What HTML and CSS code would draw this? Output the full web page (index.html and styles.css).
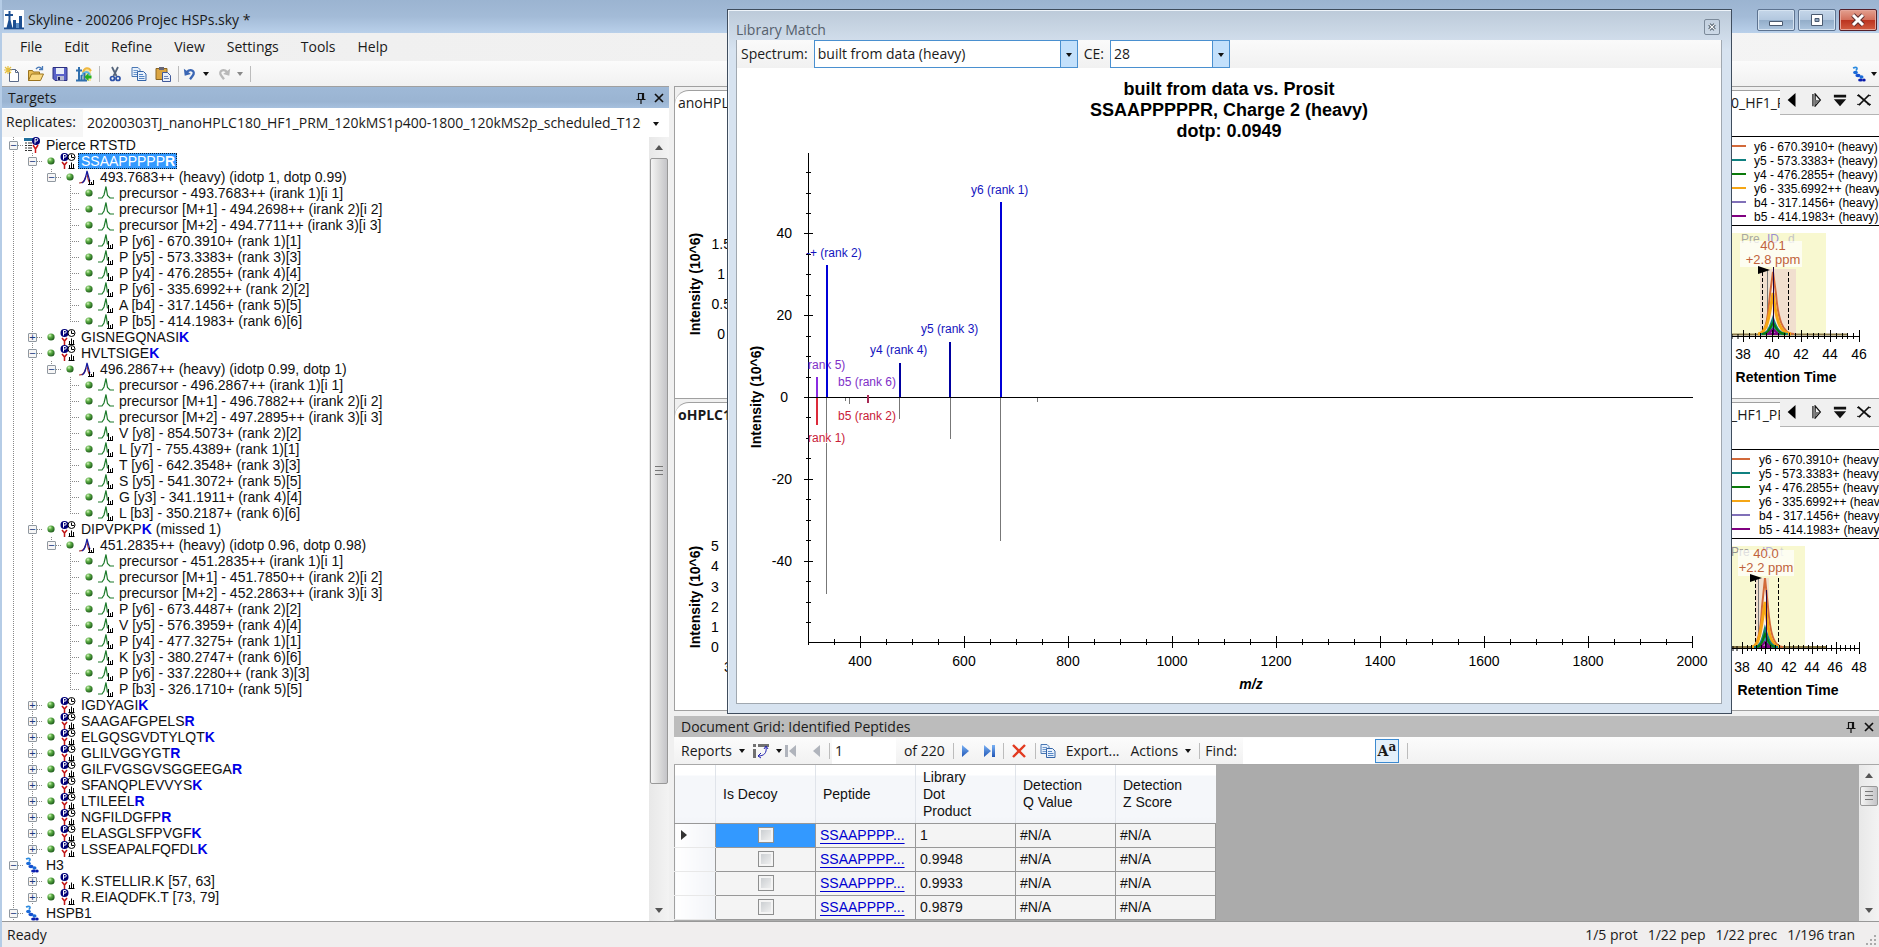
FILE: index.html
```html
<!DOCTYPE html>
<html lang="en">
<head>
<meta charset="utf-8">
<title>Skyline - 200206 Projec HSPs.sky *</title>
<link rel="stylesheet" href="styles.css">
</head>
<body>
<svg class="defs" aria-hidden="true">
  <defs>
    <radialGradient id="ball" cx="35%" cy="30%" r="70%"><stop offset="0" stop-color="#d8f5c0"/><stop offset=".4" stop-color="#5cae45"/><stop offset="1" stop-color="#1f5c1c"/></radialGradient>
    <linearGradient id="blueArrow" x1="0" y1="0" x2="0" y2="1"><stop offset="0" stop-color="#7ab2f5"/><stop offset="1" stop-color="#1f55b5"/></linearGradient>
  </defs>
  <symbol id="i-dot" viewBox="0 0 8 8"><circle cx="4" cy="4" r="3.6" fill="url(#ball)"/></symbol>
  <symbol id="i-list" viewBox="0 0 16 16"><path d="M0 1h9v3H0z" fill="#1f6f9c"/><path d="M1 6h2M4 6h4M1 8.500h2M4 8.500h4M1 11h2M4 11h4M1 13.500h2M4 13.500h4" stroke="#333"/><circle cx="12" cy="4" r="4" fill="#000078"/><path d="M11 6.500v-5h1.500a1.200 1.200 0 0 1 0 2.600H11" fill="none" stroke="#fff"/><path d="M9 8l2.500 4L14 8M11.500 12v4" fill="none" stroke="#d01515" stroke-width="1.500"/></symbol>
  <symbol id="i-pep" viewBox="0 0 16 16"><circle cx="4.500" cy="4" r="4" fill="#000078"/><path d="M3.500 6.500v-5H5a1.200 1.200 0 0 1 0 2.600H3.500" fill="none" stroke="#fff"/><path d="M2 9l2.500 3L7 9M4.500 12v4" fill="none" stroke="#c01515" stroke-width="1.500"/><path d="M8.500 15.500h6M9.500 15v-3M11.500 15V9.500M13.500 15v-4" stroke="#000"/></symbol>
  <symbol id="i-peprt" viewBox="0 0 16 16"><use href="#i-pep"/><circle cx="11.500" cy="4" r="3.500" fill="#fff" stroke="#000"/><path d="M11.500 1.500V4.500H14" fill="none" stroke="#000"/></symbol>
  <symbol id="i-prec" viewBox="0 0 16 16"><path d="M0 14c4 0 5-1 7-7M8 4c1 6 1 8 3 10" fill="none" stroke="#a03030" stroke-width="1.200"/><path d="M3 14c3-1 3.500-5 5-12 1.500 5 2 8 3 10" fill="none" stroke="#1018a0" stroke-width="1.200"/><path d="M9 15.500h6M10.500 15v-4M12.500 15v-2M14.500 15v-4" stroke="#000"/></symbol>
  <symbol id="i-peak" viewBox="0 0 16 16"><path d="M0 13h4l2-3 2-8.500 1.500 9L12 13h4" fill="none" stroke="#1c7a2a" stroke-width="1.200"/></symbol>
  <symbol id="i-peaklib" viewBox="0 0 16 16"><path d="M0 13h4l2-3 2-8.500 1.500 10" fill="none" stroke="#1c7a2a" stroke-width="1.200"/><path d="M9 15.500h6M10.500 15V8M12.500 15v-3M14.500 15v-4" stroke="#000"/></symbol>
  <symbol id="i-prot" viewBox="0 0 16 16"><path d="M2 2c4-1.500 5 0 3 2.500" fill="none" stroke="#2a8ae0" stroke-width="1.600"/><ellipse cx="4.500" cy="6.500" rx="2.400" ry="1.700" fill="#1a6ad8"/><ellipse cx="7" cy="9.500" rx="2.600" ry="1.700" fill="#1450d0"/><ellipse cx="10.500" cy="11" rx="2" ry="1.700" fill="#1a6ad8"/><ellipse cx="9.500" cy="14" rx="2.400" ry="1.600" fill="#0a20b0"/><ellipse cx="13" cy="14" rx="1.700" ry="1.600" fill="#0818a8"/></symbol>
  <symbol id="i-new" viewBox="0 0 16 16"><path d="M5.500 3.500h6l3 3v9h-9z" fill="#fff" stroke="#5a6a88"/><path d="M11.500 3.500v3h3" fill="none" stroke="#5a6a88"/><path d="M4 0v8M0 4h8M1 1l6 6M7 1L1 7" stroke="#e6c040" stroke-width="1.200"/></symbol>
  <symbol id="i-open" viewBox="0 0 16 16"><path d="M.5 14.500V4.500h4l1 1.500h6v8z" fill="#e8bd55" stroke="#9a7420"/><path d="M.5 14.500l3-6.500h12l-3 6.500z" fill="#f9da85" stroke="#9a7420"/><path d="M8 3c2-2.500 4-2.500 6 0M14.500 0v3.500H11" fill="none" stroke="#4a7ab8" stroke-width="1.300"/></symbol>
  <symbol id="i-save" viewBox="0 0 16 16"><path d="M1 1.500h14v13H3L1 12.500z" fill="#5a62c8" stroke="#2c3080"/><path d="M4 2h8v6H4z" fill="#e8edf8"/><path d="M5 10h7v4.500H5z" fill="#b8bcd0"/><path d="M6 11h2v3H6z" fill="#20245c"/></symbol>
  <symbol id="i-import" viewBox="0 0 16 16"><path d="M7 3h8v12H7z" fill="#f6e2a0"/><path d="M7 7c1-6 6-6 8-2" fill="none" stroke="#f0b840" stroke-width="2"/><path d="M6 10c1-5 6-5 8-1" fill="none" stroke="#62b7e8" stroke-width="2"/><path d="M0 14.500h11M3 14V1M0 4.500h6M5.500 14V9M8.500 14V7" stroke="#2f6fae" stroke-width="2" fill="none"/><path d="M15.500 9.500h-3V7L8.500 11l4 4v-2.500h3z" fill="#22b022"/></symbol>
  <symbol id="i-cut" viewBox="0 0 16 16"><path d="M5 1l4.500 9M11 1L6.500 10" stroke="#56657c" stroke-width="1.800"/><circle cx="5.500" cy="12.500" r="2" fill="none" stroke="#2d52a8" stroke-width="1.700"/><circle cx="11" cy="12.500" r="2" fill="none" stroke="#2d52a8" stroke-width="1.700"/></symbol>
  <symbol id="i-copy" viewBox="0 0 16 16"><path d="M1 1.500h6l2 2v7H1z" fill="#e8f1fc" stroke="#4a78b4"/><path d="M2.500 4.500H7M2.500 6.500H7M2.500 8.500H7" stroke="#6e98cc"/><path d="M6.500 5.500h6l2.500 2.500v6.500H6.500z" fill="#e8f1fc" stroke="#3565a8"/><path d="M8 8.500h4M8 10.500h5.500M8 12.500h5.500" stroke="#5485c4"/></symbol>
  <symbol id="i-paste" viewBox="0 0 16 16"><path d="M1 2.500h11v11H1z" fill="#dba542" stroke="#8a6420"/><path d="M4 1h5v3H4z" fill="#667"/><path d="M7.500 6.500h5l3 3v6h-8z" fill="#e8eef8" stroke="#40599a"/><path d="M9 10.500h4M9 12.500h5" stroke="#6e85b8"/></symbol>
  <symbol id="i-undo" viewBox="0 0 16 16"><path d="M4 6c5-5 11-1 7 4l-3 4" fill="none" stroke="currentColor" stroke-width="2.600"/><path d="M1 2l1 8 7-2z" fill="currentColor"/></symbol>
  <symbol id="i-pin" viewBox="0 0 12 12"><path d="M3.500 7V1.500h5V7M1.500 7.500h9M6 8v4M7.500 2v5" fill="none" stroke="#111" stroke-width="1.200"/></symbol>
  <symbol id="i-x" viewBox="0 0 12 12"><path d="M2 2l8 8M10 2l-8 8" stroke="#111" stroke-width="1.700"/></symbol>
  <symbol id="i-prev" viewBox="0 0 16 16"><path d="M12 0v16L3 8z" fill="#000"/></symbol>
  <symbol id="i-nextp" viewBox="0 0 16 16"><path d="M4.500 1v14M7 1l6 7-6 7z" fill="none" stroke="#111" stroke-width="1.400"/><path d="M7 8v6l5-6z" fill="#777"/></symbol>
  <symbol id="i-drop" viewBox="0 0 16 16"><path d="M1 2h14v3H1zM1 7h14l-7 8z" fill="#111"/></symbol>
  <symbol id="i-bigx" viewBox="0 0 16 16"><path d="M1 2l14 12M14 2L2 14" stroke="#111" stroke-width="2"/><path d="M0 3h3M13 3h3M0 13h4M12 13h4" stroke="#111"/></symbol>
</svg>

<div class="app">
  <header class="titlebar">
    <svg class="logo" viewBox="0 0 20 20"><path d="M0 0h20v20H0z" fill="#fff"/><path d="M0 18.500h20M5.500 18V1M1 5h8M3.500 18l2-8 2 8" stroke="#1d4f91" stroke-width="2" fill="none"/><path d="M9 10h3v8H9zM15 6h3v12h-3z" fill="#1d4f91"/><path d="M12 13h3v5h-3z" fill="#5b8cc4"/></svg>
    <h1>Skyline - 200206 Projec HSPs.sky *</h1>
    <div class="winbtns">
      <button aria-label="Minimize"><svg viewBox="0 0 16 16"><path d="M1.500 9.500h13v4h-13z" fill="#fff" stroke="#4a5a70"/></svg></button>
      <button aria-label="Restore"><svg viewBox="0 0 16 16"><path d="M2.500 2.500h11v11h-11z" fill="#fff" stroke="#4a5a70"/><path d="M6 6.500h4v3H6z" fill="#8fa5bf" stroke="#4a5a70"/></svg></button>
      <button class="close" aria-label="Close"><svg viewBox="0 0 16 16"><path d="M3 3l10 10M13 3L3 13" stroke="#5c3030" stroke-width="5"/><path d="M3 3l10 10M13 3L3 13" stroke="#fff" stroke-width="3"/></svg></button>
    </div>
  </header>

  <nav class="menu">
    <button>File</button><button>Edit</button><button>Refine</button><button>View</button><button>Settings</button><button>Tools</button><button>Help</button>
  </nav>

  <div class="toolbar">
    <button aria-label="New"><svg><use href="#i-new"/></svg></button>
    <button aria-label="Open"><svg><use href="#i-open"/></svg></button>
    <button aria-label="Save"><svg><use href="#i-save"/></svg></button>
    <button aria-label="Import results"><svg><use href="#i-import"/></svg></button>
    <i class="sep"></i>
    <button aria-label="Cut"><svg><use href="#i-cut"/></svg></button>
    <button aria-label="Copy"><svg><use href="#i-copy"/></svg></button>
    <button aria-label="Paste"><svg><use href="#i-paste"/></svg></button>
    <i class="sep"></i>
    <button class="undo" aria-label="Undo"><svg><use href="#i-undo"/></svg><i class="caret"></i></button>
    <button class="redo" aria-label="Redo"><svg class="flip"><use href="#i-undo"/></svg><i class="caret"></i></button>
    <i class="sep"></i>
    <button class="far" aria-label="Targets view"><svg><use href="#i-prot"/></svg><i class="caret"></i></button>
  </div>

  <main class="work">
    <section class="targets">
      <div class="dockhead"><h2>Targets</h2><button aria-label="Auto hide"><svg><use href="#i-pin"/></svg></button><button aria-label="Close Targets"><svg><use href="#i-x"/></svg></button></div>
      <div class="replicates">
        <label for="rep">Replicates:</label>
        <span class="pick flat"><select id="rep"><option>20200303TJ_nanoHPLC180_HF1_PRM_120kMS1p400-1800_120kMS2p_scheduled_T120_01</option></select></span>
      </div>
      <div class="treebox">
        <ul class="tree" id="tree"></ul>
        <div class="scroll"><i class="up"></i><i class="thumb long"></i><i class="down"></i></div>
      </div>
    </section>

    <div class="right">
      <div class="plots">
        <section class="pane">
          <div class="tabs">
            <span class="tab"><span>anoHPLC180</span><span class="tail">0_HF1_PR</span></span>
            <button aria-label="Previous tab"><svg><use href="#i-prev"/></svg></button><button aria-label="Next tab"><svg><use href="#i-nextp"/></svg></button><button aria-label="Tab list"><svg><use href="#i-drop"/></svg></button><button aria-label="Close tab"><svg><use href="#i-bigx"/></svg></button>
          </div>
          <div class="graphs">
            <svg class="gleft" viewBox="675 114 60 284">
              <text class="b14" text-anchor="middle" transform="translate(700 283) rotate(-90)">Intensity (10^6)</text>
              <g class="t14" text-anchor="end"><text x="731" y="248">1.5</text><text x="725" y="278">1</text><text x="731" y="308">0.5</text><text x="725" y="338">0</text></g>
            </svg>
            <svg class="gright" viewBox="1731 114 148 284">
              <path d="M1731 135.500h148M1731 224.500h148" stroke="#000"/>
              <g stroke-width="2"><path d="M1731 145h15" stroke="#d2693a"/><path d="M1731 159h15" stroke="#0f8080"/><path d="M1731 173h15" stroke="#0a7a0a"/><path d="M1731 187h15" stroke="#f5a615"/><path d="M1731 201h15" stroke="#8070b8"/><path d="M1731 215h15" stroke="#800080"/></g>
              <g class="t12"><text x="1754" y="150">y6 - 670.3910+ (heavy)</text><text x="1754" y="164">y5 - 573.3383+ (heavy)</text><text x="1754" y="178">y4 - 476.2855+ (heavy)</text><text x="1754" y="192">y6 - 335.6992++ (heavy)</text><text x="1754" y="206">b4 - 317.1456+ (heavy)</text><text x="1754" y="220">b5 - 414.1983+ (heavy)</text></g>
              <path d="M1731 232h95v102h-95z" fill="#f8f8d0"/>
              <path d="M1760 268h36v66h-36z" fill="#f1dfcf"/>
              <text class="t12" x="1741" y="242" fill="#a8a8a0">Pre</text><text class="t12" x="1767" y="242" fill="#9a8fd0">ID</text><text class="t12" x="1788" y="242" fill="#c4c4c4">d</text>
              <path d="M1740 240h62v26h-62z" fill="#fff" fill-opacity=".7"/>
              <path d="M1767.500 268v66" stroke="#777"/><path d="M1762.500 271v63M1788.500 271v63" stroke="#000" stroke-dasharray="4 2"/>
              <path d="M1731 333.500h117" stroke="#8a7a48" stroke-width="2"/>
              <g fill="none" stroke-width="2">
                <path d="M1758 333c9 0 10-20 12-40l3-22 3 22c2 24 6 40 18 40" stroke="#d2693a" fill="#fff" fill-opacity=".5"/>
                <path d="M1758 333c9 0 11-16 15-41 3 25 6 41 18 41" stroke="#f5a615" stroke-width="3"/>
                <path d="M1760 333c7 0 9-4 13-16 4 12 7 16 15 16z" stroke="#0f8080" fill="#2a9a9a"/>
                <path d="M1762 333c6 0 7-4 11-11 4 7 6 11 13 11" stroke="#0a7a0a"/>
                <path d="M1768 333l5-5 5 5z" stroke="#800080" fill="#b080c0"/>
              </g>
              <path d="M1773.500 266v68" stroke="#200040"/>
              <path d="M1758 265l12 4-12 4z"/>
              <g class="t13" text-anchor="middle" fill="#c0623c"><text x="1773" y="249">40.1</text><text x="1773" y="263">+2.8 ppm</text></g>
              <g id="ax1" stroke="#000"></g>
              <g class="t14" text-anchor="middle"><text x="1743" y="358">38</text><text x="1772" y="358">40</text><text x="1801" y="358">42</text><text x="1830" y="358">44</text><text x="1859" y="358">46</text></g>
              <text class="b14" x="1786" y="381" text-anchor="middle">Retention Time</text>
            </svg>
          </div>
        </section>
        <section class="pane">
          <div class="tabs active">
            <span class="tab"><span>oHPLC180</span><span class="tail">_HF1_PRM</span></span>
            <button aria-label="Previous tab"><svg><use href="#i-prev"/></svg></button><button aria-label="Next tab"><svg><use href="#i-nextp"/></svg></button><button aria-label="Tab list"><svg><use href="#i-drop"/></svg></button><button aria-label="Close tab"><svg><use href="#i-bigx"/></svg></button>
          </div>
          <div class="graphs">
            <svg class="gleft" viewBox="675 427 60 284">
              <text class="b14" text-anchor="middle" transform="translate(700 597) rotate(-90)">Intensity (10^6)</text>
              <g class="t14" text-anchor="middle"><text x="715" y="551">5</text><text x="715" y="571">4</text><text x="715" y="592">3</text><text x="715" y="612">2</text><text x="715" y="632">1</text><text x="715" y="652">0</text><text x="728" y="672">3</text></g>
            </svg>
            <svg class="gright" viewBox="1731 427 148 284">
              <path d="M1731 449.500h148M1731 538.500h148" stroke="#000"/>
              <g stroke-width="2"><path d="M1731 459h19" stroke="#d2693a"/><path d="M1731 473h19" stroke="#0f8080"/><path d="M1731 487h19" stroke="#0a7a0a"/><path d="M1731 501h19" stroke="#f5a615"/><path d="M1731 515h19" stroke="#8070b8"/><path d="M1731 529h19" stroke="#800080"/></g>
              <g class="t12"><text x="1759" y="464">y6 - 670.3910+ (heavy)</text><text x="1759" y="478">y5 - 573.3383+ (heavy)</text><text x="1759" y="492">y4 - 476.2855+ (heavy)</text><text x="1759" y="506">y6 - 335.6992++ (heavy)</text><text x="1759" y="520">b4 - 317.1456+ (heavy)</text><text x="1759" y="534">b5 - 414.1983+ (heavy)</text></g>
              <path d="M1731 546h74v102h-74z" fill="#f8f8d0"/>
              <path d="M1755 578h14v70h-14z" fill="#f1dfcf"/>
              <text class="t12" x="1731" y="556" fill="#909090">Pre</text><text class="t12" x="1762" y="556" fill="#b8b0d8">ID</text><text class="t12" x="1780" y="556" fill="#d0d0d0">t</text>
              <path d="M1738 550h56v26h-56z" fill="#fff" fill-opacity=".7"/>
              <path d="M1758.500 578v70" stroke="#777"/><path d="M1755.500 578v70M1778.500 578v70" stroke="#000" stroke-dasharray="4 2"/>
              <path d="M1731 647h96" stroke="#8a7a48" stroke-width="2"/>
              <g fill="none" stroke-width="2">
                <path d="M1751 647c8 0 10-20 11-40l3-29 3 29c2 24 5 40 15 40" stroke="#d2693a" fill="#fff" fill-opacity=".5"/>
                <path d="M1752 647c7 0 9-16 13-45 3 29 5 45 15 45" stroke="#f5a615" stroke-width="3"/>
                <path d="M1754 647c6 0 8-6 11-19 4 13 6 19 13 19z" stroke="#0f8080" fill="#2a9a9a"/>
                <path d="M1756 647c5 0 6-4 9-13 4 9 5 13 11 13" stroke="#0a7a0a"/>
                <path d="M1761 647l4-5 5 5z" stroke="#800080" fill="#b080c0"/>
              </g>
              <path d="M1766.500 590v58" stroke="#200040"/>
              <path d="M1750 574l12 4-12 4z"/>
              <g class="t13" text-anchor="middle" fill="#c0623c"><text x="1766" y="558">40.0</text><text x="1766" y="572">+2.2 ppm</text></g>
              <g id="ax2" stroke="#000"></g>
              <g class="t14" text-anchor="middle"><text x="1742" y="672">38</text><text x="1765" y="672">40</text><text x="1789" y="672">42</text><text x="1812" y="672">44</text><text x="1835" y="672">46</text><text x="1859" y="672">48</text></g>
              <text class="b14" x="1788" y="695" text-anchor="middle">Retention Time</text>
            </svg>
          </div>
        </section>
      </div>

      <section class="docgrid">
        <div class="dockhead gray"><h2>Document Grid: Identified Peptides</h2><button aria-label="Auto hide"><svg><use href="#i-pin"/></svg></button><button aria-label="Close Document Grid"><svg><use href="#i-x"/></svg></button></div>
        <div class="gridbar">
          <button class="txt">Reports<i class="caret"></i></button>
          <button class="pivot" aria-label="Pivot"><svg viewBox="0 0 16 16"><path d="M0 1h3v3H0zM5 1h11v3H5zM0 6h3v9H0z" fill="#707070"/><path d="M13 4c1 6-2 9-8 9M11 6l2-3 2 3M8 10l-3 3 3 2" fill="none" stroke="#2020b0"/></svg><i class="caret"></i></button>
          <button class="first" aria-label="First"><svg viewBox="0 0 16 16"><path d="M2 2h3v12H2zM13 2v12L6 8z" fill="#b0b4bc"/></svg></button>
          <button class="prev" aria-label="Previous"><svg viewBox="0 0 16 16"><path d="M11 2v12L4 8z" fill="#b0b4bc"/></svg></button>
          <i class="sep"></i>
          <input class="pos" aria-label="Record" value="1">
          <span class="of">of 220</span>
          <i class="sep"></i>
          <button class="next" aria-label="Next"><svg viewBox="0 0 16 16"><path d="M5 2v12l7-6z" fill="url(#blueArrow)"/></svg></button>
          <button class="last" aria-label="Last"><svg viewBox="0 0 16 16"><path d="M3 2v12l7-6zM11 2h3v12h-3z" fill="url(#blueArrow)"/></svg></button>
          <i class="sep"></i>
          <button class="del" aria-label="Delete"><svg viewBox="0 0 16 16"><path d="M2 2l12 12M14 2L2 14" stroke="#e23a20" stroke-width="2.400"/></svg></button>
          <i class="sep"></i>
          <button class="txt exp"><svg><use href="#i-copy"/></svg>Export...</button>
          <button class="txt">Actions<i class="caret"></i></button>
          <i class="sep"></i>
          <label for="find">Find:</label><input id="find" class="find">
          <button class="case" aria-label="Match case">A<sup>a</sup></button>
          <i class="sep"></i>
        </div>
        <div class="gridbody">
          <div class="sheet">
          <table>
            <thead><tr><th class="rh"></th><th>Is Decoy</th><th>Peptide</th><th>Library<br>Dot<br>Product</th><th>Detection<br>Q Value</th><th>Detection<br>Z Score</th></tr></thead>
            <tbody>
              <tr><td class="rh"><i class="cur"></i></td><td class="ck on"><input type="checkbox" aria-label="Is Decoy, row 1"></td><td class="pp"><a href="#">SSAAPPPP...</a></td><td>1</td><td>#N/A</td><td>#N/A</td></tr>
              <tr><td class="rh"></td><td class="ck"><input type="checkbox" aria-label="Is Decoy, row 2"></td><td class="pp"><a href="#">SSAAPPPP...</a></td><td>0.9948</td><td>#N/A</td><td>#N/A</td></tr>
              <tr><td class="rh"></td><td class="ck"><input type="checkbox" aria-label="Is Decoy, row 3"></td><td class="pp"><a href="#">SSAAPPPP...</a></td><td>0.9933</td><td>#N/A</td><td>#N/A</td></tr>
              <tr><td class="rh"></td><td class="ck"><input type="checkbox" aria-label="Is Decoy, row 4"></td><td class="pp"><a href="#">SSAAPPPP...</a></td><td>0.9879</td><td>#N/A</td><td>#N/A</td></tr>
            </tbody>
          </table>
          </div>
          <div class="scroll"><i class="up"></i><i class="thumb short"></i><i class="space"></i><i class="down"></i></div>
        </div>
      </section>
    </div>
  </main>

  <footer class="status"><span>Ready</span><span class="counts"><span>1/5 prot</span><span>1/22 pep</span><span>1/22 prec</span><span>1/196 tran</span></span>
    <svg class="grip" viewBox="0 0 12 12"><path d="M9 0h2v2H9zM5 4h2v2H5zM9 4h2v2H9zM1 8h2v2H1zM5 8h2v2H5zM9 8h2v2H9z" fill="#aaa"/></svg></footer>

  <section class="float">
    <div class="floathead"><h2>Library Match</h2><button aria-label="Close Library Match"><svg viewBox="0 0 12 12"><path d="M2 2l8 8M10 2l-8 8" stroke="#4a5866" stroke-width="4.500"/><path d="M2 2l8 8M10 2l-8 8" stroke="#fff" stroke-width="1.800"/></svg></button></div>
    <div class="floatbody">
      <div class="specbar">
        <label for="spec">Spectrum:</label><span class="pick spec"><select id="spec"><option>built from data (heavy)</option></select></span>
        <label for="ce">CE:</label><span class="pick ce"><select id="ce"><option>28</option></select></span>
      </div>
      <svg class="spectrum" viewBox="737 68 984 635" role="img" aria-label="Library match spectrum">
        <g class="title" text-anchor="middle"><text x="1229" y="95">built from data vs. Prosit</text><text x="1229" y="116">SSAAPPPPPR, Charge 2 (heavy)</text><text x="1229" y="137">dotp: 0.0949</text></g>
        <g id="axes" stroke="#000"></g>
        <g id="axlabels" class="t14"></g>
        <text class="b14" text-anchor="middle" transform="translate(761 397) rotate(-90)">Intensity (10^6)</text>
        <text class="mz" x="1251" y="689" text-anchor="middle">m/z</text>
        <g stroke="#777"><path d="M826.500 398v196M1000.500 398v143M950.500 398v41M899.500 398v21M845.500 398v3M849.500 398v6M1037.500 398v4"/></g>
        <path d="M809 433h38v10h-38z" fill="#fff"/>
        <g class="t12" fill="#8030c8"><text x="808" y="369">rank 5)</text><text x="838" y="386">b5 (rank 6)</text></g>
        <path d="M827 265v132M1001 202v195" stroke="#0000d8" stroke-width="2"/>
        <path d="M900 363v34M950 342v55" stroke="#0000a0" stroke-width="2"/>
        <path d="M817 377v20" stroke="#8a2be2" stroke-width="2"/><path d="M817 398v27" stroke="#dc2a3a" stroke-width="2"/><path d="M868 395v8" stroke="#a82a55" stroke-width="2"/>
        <g class="t12" fill="#1414c0">
          <text x="806" y="257">-+ (rank 2)</text><text x="971" y="194">y6 (rank 1)</text><text x="921" y="333">y5 (rank 3)</text><text x="870" y="354">y4 (rank 4)</text>
        </g>
        <g class="t12" fill="#c82038"><text x="808" y="442">rank 1)</text><text x="838" y="420">b5 (rank 2)</text></g>
      </svg>
    </div>
  </section>
</div>
<script src="app.js"></script>
</body>
</html>
```

FILE: app.js
```js
// Each node: [level, icon, text, state]; state is "-" open, "+" closed, "" leaf.
// A residue between asterisks is drawn as a heavy-labelled one.
const nodes = [
  [0, "list", "Pierce RTSTD", "-"],
  [1, "peprt", "SSAAPPPPP*R*", "-", true],
  [2, "prec", "493.7683++ (heavy) (idotp 1, dotp 0.99)", "-"],
  [3, "peak", "precursor - 493.7683++ (irank 1)[i 1]"],
  [3, "peak", "precursor [M+1] - 494.2698++ (irank 2)[i 2]"],
  [3, "peak", "precursor [M+2] - 494.7711++ (irank 3)[i 3]"],
  [3, "peaklib", "P [y6] - 670.3910+ (rank 1)[1]"],
  [3, "peaklib", "P [y5] - 573.3383+ (rank 3)[3]"],
  [3, "peaklib", "P [y4] - 476.2855+ (rank 4)[4]"],
  [3, "peaklib", "P [y6] - 335.6992++ (rank 2)[2]"],
  [3, "peaklib", "A [b4] - 317.1456+ (rank 5)[5]"],
  [3, "peaklib", "P [b5] - 414.1983+ (rank 6)[6]"],
  [1, "peprt", "GISNEGQNASI*K*", "+"],
  [1, "peprt", "HVLTSIGE*K*", "-"],
  [2, "prec", "496.2867++ (heavy) (idotp 0.99, dotp 1)", "-"],
  [3, "peak", "precursor - 496.2867++ (irank 1)[i 1]"],
  [3, "peak", "precursor [M+1] - 496.7882++ (irank 2)[i 2]"],
  [3, "peak", "precursor [M+2] - 497.2895++ (irank 3)[i 3]"],
  [3, "peaklib", "V [y8] - 854.5073+ (rank 2)[2]"],
  [3, "peaklib", "L [y7] - 755.4389+ (rank 1)[1]"],
  [3, "peaklib", "T [y6] - 642.3548+ (rank 3)[3]"],
  [3, "peaklib", "S [y5] - 541.3072+ (rank 5)[5]"],
  [3, "peaklib", "G [y3] - 341.1911+ (rank 4)[4]"],
  [3, "peaklib", "L [b3] - 350.2187+ (rank 6)[6]"],
  [1, "peprt", "DIPVPKP*K* (missed 1)", "-"],
  [2, "prec", "451.2835++ (heavy) (idotp 0.96, dotp 0.98)", "-"],
  [3, "peak", "precursor - 451.2835++ (irank 1)[i 1]"],
  [3, "peak", "precursor [M+1] - 451.7850++ (irank 2)[i 2]"],
  [3, "peak", "precursor [M+2] - 452.2863++ (irank 3)[i 3]"],
  [3, "peaklib", "P [y6] - 673.4487+ (rank 2)[2]"],
  [3, "peaklib", "V [y5] - 576.3959+ (rank 4)[4]"],
  [3, "peaklib", "P [y4] - 477.3275+ (rank 1)[1]"],
  [3, "peaklib", "K [y3] - 380.2747+ (rank 6)[6]"],
  [3, "peaklib", "P [y6] - 337.2280++ (rank 3)[3]"],
  [3, "peaklib", "P [b3] - 326.1710+ (rank 5)[5]"],
  [1, "peprt", "IGDYAGI*K*", "+"],
  [1, "peprt", "SAAGAFGPELS*R*", "+"],
  [1, "peprt", "ELGQSGVDTYLQT*K*", "+"],
  [1, "peprt", "GLILVGGYGT*R*", "+"],
  [1, "peprt", "GILFVGSGVSGGEEGA*R*", "+"],
  [1, "peprt", "SFANQPLEVVYS*K*", "+"],
  [1, "peprt", "LTILEEL*R*", "+"],
  [1, "peprt", "NGFILDGFP*R*", "+"],
  [1, "peprt", "ELASGLSFPVGF*K*", "+"],
  [1, "peprt", "LSSEAPALFQFDL*K*", "+"],
  [0, "prot", "H3", "-"],
  [1, "pep", "K.STELLIR.K [57, 63]", "+"],
  [1, "pep", "R.EIAQDFK.T [73, 79]", "+"],
  [0, "prot", "HSPB1", "-"]
];

const tree = document.getElementById("tree");
nodes.forEach(([level, icon, text, state, selected], i) => {
  const next = nodes[i + 1] ? nodes[i + 1][0] : 0;
  let cells = "";
  for (let c = 0; c < level; c++) cells += `<i class="cell${c < 2 ? " line" : ""}"></i>`;
  const kind = state ? "knot" : next < level ? "leaf end" : "leaf";
  const through = level < 2 ? " line" : " half";
  cells += state
    ? `<button class="cell ${kind}${through}" aria-label="Toggle"><b>${state === "-" ? "−" : "+"}</b></button>`
    : `<i class="cell ${kind}"></i>`;
  const dot = level ? '<svg class="dot"><use href="#i-dot"/></svg>' : "";
  const label = text.replace(/\*(.)\*/, "<strong>$1</strong>");
  tree.insertAdjacentHTML("beforeend",
    `<li>${cells}${dot}<svg class="kind${level ? "" : " top"}"><use href="#i-${icon}"/></svg><span class="label${selected ? " sel" : ""}">${label}</span></li>`);
});

function ticks(x, step, count, y, every) {
  let d = "";
  for (let i = 0; i < count; i++) {
    const h = i % every === 0 ? 6 : 3;
    d += `M${Math.round(x + i * step) + 0.5} ${y - h}v${2 * h}`;
  }
  return d;
}

document.getElementById("ax1").innerHTML = `<path d="M1731 335.500h129${ticks(1743, 5.8, 21, 335, 5)}M1738 333v5M1732 333v5"/>`;
document.getElementById("ax2").innerHTML = `<path d="M1731 648.500h129${ticks(1742, 4.68, 26, 648, 5)}M1737 646v5M1733 646v5"/>`;

let y = "";
for (let v = -55; v <= 55; v += 5) {
  const py = Math.round(397 - v * 4.09) + 0.5;
  y += v % 20 === 0 ? `M804 ${py}h9` : `M806 ${py}h5`;
}
document.getElementById("axes").innerHTML =
  `<path d="M808.500 153v489M804 397.500h889M808 642.500h885${ticks(860, 26, 33, 642, 4)}M834.500 639v6M808.500 639v6${y}"/>`;

let labels = "";
for (let v = 400; v <= 2000; v += 200)
  labels += `<text x="${860 + (v - 400) * 0.52}" y="666" text-anchor="middle">${v}</text>`;
for (const v of [40, 20, 0, -20, -40])
  labels += `<text x="${v ? 792 : 788}" y="${Math.round(402 - v * 4.09)}" text-anchor="end">${v}</text>`;
document.getElementById("axlabels").innerHTML = labels;
```

FILE: styles.css
```css
* { box-sizing: border-box; }
body { margin: 0; font: 14px/20px "Open Sans", "Noto Sans", sans-serif; color: #1a1a1a; }
h1, h2 { margin: 0; font-size: 14px; font-weight: normal; }
button, input, select { font: inherit; color: inherit; border: 0; padding: 0; margin: 0; background: none; border-radius: 0; }
svg { display: block; flex: none; }
.defs { position: absolute; width: 0; height: 0; }
.app { position: relative; height: 100vh; display: flex; flex-direction: column; background: #f0f0f0; overflow: hidden; border-left: 2px solid #b5cce6; }

.titlebar { flex: none; height: 33px; display: flex; align-items: center; padding: 6px 2px 0 4px; margin-left: -2px; gap: 4px; background: linear-gradient(#9bb4d1, #a3bbd7 50%, #b9d0ea); }
.logo { width: 20px; height: 20px; }
.titlebar h1 { flex: 1; }
.winbtns { display: flex; gap: 3px; }
.winbtns button { width: 38px; height: 22px; display: flex; align-items: center; justify-content: center; border: 1px solid #5d7390; border-radius: 2px; background: linear-gradient(#c5d6e9, #b3c8df 48%, #93adc9 52%, #adc5df); box-shadow: inset 0 0 0 1px #d5e3f1; }
.winbtns .close { background: linear-gradient(#e3a08f, #d3705c 48%, #bb3420 52%, #d25c40); border-color: #54202a; box-shadow: inset 0 0 0 1px #e5a599; }
.winbtns svg { width: 16px; height: 16px; }

.menu { flex: none; height: 28px; display: flex; align-items: center; padding-left: 8px; gap: 2px; background: linear-gradient(90deg, #efefef, #f4f4f4); }
.menu button { padding: 0 10px; }
.toolbar { flex: none; height: 25px; display: flex; align-items: center; padding: 0 2px; gap: 8px; background: linear-gradient(#fbfbfb, #f1f1f1); }
.toolbar svg { width: 16px; height: 16px; }
.toolbar button { display: flex; align-items: center; gap: 6px; }
.toolbar .undo { color: #3a66b4; }
.toolbar .redo { color: #b8b8b8; }
.toolbar .undo svg, .toolbar .redo svg { width: 14px; height: 14px; }
.toolbar .undo { margin-left: -3px; }
.flip { transform: scaleX(-1); }
.toolbar .far { margin-left: auto; gap: 4px; }
.toolbar .sep { margin: 0 -1px; }
.sep { flex: none; width: 1px; height: 16px; background: #bcbcbc; }
.caret { flex: none; border: 3px solid transparent; border-top: 4px solid #111; border-bottom: 0; }
.redo .caret { border-top-color: #888; }

.work { flex: 1; min-height: 0; display: flex; gap: 5px; }
.targets { flex: none; width: 667px; display: flex; flex-direction: column; background: #fff; border-top: 1px solid #a0a0a0; }
.dockhead { flex: none; height: 21px; display: flex; align-items: center; padding: 0 4px 0 6px; gap: 6px; background: linear-gradient(#9fb9d7, #9ab4d2 70%, #a6c0de); }
.dockhead h2 { flex: 1; }
.dockhead svg { width: 12px; height: 12px; }
.gray { background: #bcbcbc; padding-left: 7px; }
.replicates { flex: none; height: 29px; display: flex; align-items: center; background: #fff; }
.replicates label { padding: 0 6px 2px 4px; background: #f6f6f6; line-height: 26px; width: 81px; }
.pick { position: relative; display: flex; }
.pick select { appearance: none; width: 100%; height: 26px; padding: 0 20px 0 3px; background: #fff; overflow: hidden; white-space: nowrap; text-overflow: clip; }
.pick::after { content: ""; position: absolute; right: 7px; top: 12px; border: 3px solid transparent; border-top: 4px solid #111; border-bottom: 0; }
.flat { width: 584px; }
.flat select { padding-left: 4px; padding-right: 26px; }
.flat::after { right: 8px; }
.treebox { flex: 1; min-height: 0; display: flex; }
.tree { flex: 1; margin: 0; padding: 0 0 0 2px; list-style: none; overflow: hidden; font: 14px/16px "Liberation Sans", Arial, sans-serif; color: #111; }
.tree li { display: flex; align-items: center; height: 16px; white-space: nowrap; }
.cell { flex: none; position: relative; width: 19px; height: 16px; }
.line { background: repeating-linear-gradient(#888 0 1px, transparent 1px 2px) 9px 0 / 1px 100% no-repeat; }
.half { background: repeating-linear-gradient(#888 0 1px, transparent 1px 2px) 9px 0 / 1px 4px no-repeat; }
.leaf { background: repeating-linear-gradient(#888 0 1px, transparent 1px 2px) 9px 0 / 1px 100% no-repeat, repeating-linear-gradient(90deg, #888 0 1px, transparent 1px 2px) 9px 8px / 10px 1px no-repeat; }
.leaf.end { background-size: 1px 8px, 10px 1px; }
.knot::after { content: ""; position: absolute; left: 14px; top: 8px; width: 5px; border-top: 1px dotted #888; }
.knot b { position: absolute; left: 5px; top: 4px; width: 9px; height: 9px; border: 1px solid #9098a0; border-radius: 1px; background: #f6f6f6; font: 11px/7px "Liberation Sans", Arial, sans-serif; color: #1c3a80; text-align: center; }
.dot { width: 8px; height: 8px; margin: 0 5px; }
.kind { width: 16px; height: 16px; margin-right: 2px; }
.kind.top { margin: 0 3px 0 1px; }
.label { padding: 0 2px 0 3px; height: 16px; }
.label strong { color: #0000e6; }
.sel { background: #3399ff; color: #fff; outline: 1px dotted #123; outline-offset: -1px; }
.label.sel strong { color: #fff; }

.scroll { flex: none; width: 20px; display: flex; flex-direction: column; align-items: center; background: linear-gradient(90deg, #e8e8e8, #f3f3f3); }
.up, .down { flex: none; width: 0; height: 0; margin: 8px 0; border: 4px solid transparent; border-bottom: 5px solid #555; border-top: 0; }
.down { border-top: 5px solid #555; border-bottom: 0; }
.thumb { position: relative; width: 18px; border: 1px solid #989898; border-radius: 2px; background: linear-gradient(90deg, #f4f4f4, #dcdcdc 50%, #c4c4c8); }
.thumb::after { content: ""; position: absolute; left: 4px; top: calc(50% - 5px); width: 8px; height: 11px; background: repeating-linear-gradient(#777 0 1px, transparent 1px 4px); }
.long { flex: 1; margin-bottom: 124px; }
.short { height: 20px; flex: none; }
.space { flex: 1; }
.treebox .down { margin-top: 0; }

.right { flex: 1; min-width: 0; display: flex; flex-direction: column; gap: 5px; }
.plots { flex: 625 1 0; min-height: 0; display: flex; flex-direction: column; border-left: 1px solid #a0a0a0; border-bottom: 1px solid #a0a0a0; background: #fff; }
.pane { flex: 1 1 0; min-height: 0; display: flex; flex-direction: column; border-top: 1px solid #a0a0a0; overflow: hidden; }
.tabs { flex: none; height: 28px; display: flex; align-items: flex-end; background: #f0f0f0; border-bottom: 1px solid #b4b4b4; }
.tab { flex: 1; height: 25px; margin-bottom: -1px; display: flex; justify-content: space-between; background: #fff; border-top: 1px solid #a0a0a0; border-top-left-radius: 14px; padding-left: 3px; line-height: 24px; overflow: hidden; }
.tail { width: 49px; overflow: hidden; font-weight: normal; }
.active .tab { font-weight: bold; }
.active .tab .tail { font-weight: normal; }
.tabs button { width: 24px; height: 28px; padding: 0 4px; }
.tabs button:last-child { margin-right: 3px; }
.tabs svg { width: 16px; height: 14px; }
.graphs { display: flex; justify-content: space-between; }
.gleft { width: 60px; height: 284px; }
.gright { width: 148px; height: 284px; }

.t12 { font: 12px "Liberation Sans", Arial, sans-serif; }
.t13 { font: 13px "Liberation Sans", Arial, sans-serif; }
.t14 { font: 14px "Liberation Sans", Arial, sans-serif; stroke: none; }
.b14 { font: bold 14px "Liberation Sans", Arial, sans-serif; }
.mz { font: italic bold 14px "Liberation Sans", Arial, sans-serif; }
.title { font: bold 18px "Liberation Sans", Arial, sans-serif; }

.docgrid { flex: 205 1 0; min-height: 0; display: flex; flex-direction: column; overflow: hidden; }
.gridbar { flex: none; height: 28px; display: flex; align-items: center; padding-left: 7px; gap: 8px; background: linear-gradient(#fcfcfc, #f1f1f1); border-bottom: 1px solid #a8a8a8; }
.gridbar button { display: flex; align-items: center; gap: 7px; }
.gridbar svg { width: 16px; height: 16px; }
.first { margin-left: -7px; }
.gridbar .first { margin-left: -7px; }
.gridbar .prev { margin: 0 -4px 0 2px; }
.pos { width: 64px; height: 26px; padding-left: 3px; background: #fff; margin-left: -6px; }
.gridbar .exp { margin: 0 3px 0 -4px; gap: 10px; }
.gridbar .next { margin-left: -5px; }
.gridbar .last { margin-right: -2px; }
.gridbar .del { margin-left: -1px; }
.gridbar label { margin-left: -3px; }
.find { width: 132px; height: 26px; background: #fff; margin-right: -8px; margin-left: -2px; }
.gridbar .case { width: 24px; height: 24px; justify-content: center; gap: 0; border: 1px solid #3c8ad0; background: #e4f0fa; font: bold 14px "DejaVu Serif", serif; }
.case sup { font-size: 12px; line-height: 8px; align-self: flex-start; margin-top: 3px; }
.gridbody { flex: 1; min-height: 0; display: flex; background: #ababab; }
.sheet { flex: 1; min-height: 0; overflow: hidden; }
table { border-collapse: collapse; table-layout: fixed; width: 541px; font: 14px/17px "Liberation Sans", Arial, sans-serif; color: #111; border-left: 1px solid #a0a0a0; }
th { height: 58px; width: 100px; padding: 0 0 0 7px; text-align: left; font-weight: normal; background: linear-gradient(#fff 0 10px, #f5f7fa 11px 50px, #f2f4f8); border-left: 1px solid #e0e4ea; border-bottom: 1px solid #989898; }
th.rh { width: 41px; border-left: 0; }
td { height: 24px; padding: 0 0 0 4px; background: #f4f4f4; border: 1px solid #989898; }
td.rh { background: linear-gradient(90deg, #fff, #f2f4f8); border-color: #e8e8e8 #989898 #e8e8e8 #a0a0a0; padding-left: 6px; }
td.ck { padding: 0; text-align: center; }
td.on { background: #3399ff; }
.ck input { appearance: none; display: block; width: 16px; height: 16px; margin: 0 auto; border: 1px solid #8e8f8f; background: linear-gradient(135deg, #c4c8cc, #f6f6f6); box-shadow: inset 0 0 0 2px #f4f4f4; }
td a { color: #0000d0; text-underline-offset: 3px; }
.cur { display: block; width: 0; height: 0; border: 5px solid transparent; border-left: 6px solid #333; border-right: 0; }

.status { flex: none; height: 26px; display: flex; align-items: center; border-top: 1px solid #989898; background: #f0eeee; padding: 0 2px 0 5px; }
.counts { margin-left: auto; display: flex; gap: 10px; }
.grip { width: 12px; height: 12px; align-self: flex-end; margin-left: 10px; }

.float { position: absolute; left: 725px; right: 147px; top: 9px; bottom: 233px; display: flex; flex-direction: column; padding: 0 9px 9px 8px; border: 1px solid #3f4d5e; background: linear-gradient(#bccad9 0, #d7e3f0 40px); box-shadow: inset 1px 1px 0 #eef4fa; }
.floathead { flex: none; height: 30px; display: flex; align-items: center; justify-content: space-between; padding: 10px 2px 0 0; }
.floathead h2 { color: #56606c; }
.floathead button { width: 16px; height: 16px; margin-bottom: 6px; display: flex; align-items: center; justify-content: center; border: 1px solid #7c8a9a; border-radius: 2px; }
.floathead svg { width: 8px; height: 8px; }
.floatbody { flex: 1; min-height: 0; display: flex; flex-direction: column; background: #fff; border: 1px solid #a0a8b0; border-top: 0; }
.specbar { flex: none; height: 28px; display: flex; align-items: center; padding-left: 4px; gap: 6px; background: linear-gradient(#fafafa, #f1f1f1); }
.spec { width: 264px; }
.ce { width: 120px; }
.spec, .ce { border: 1px solid #4a90d0; background: #c3e0fb; }
.spec select, .ce select { width: calc(100% - 16px); border-right: 1px solid #4a90d0; }
.spec::after, .ce::after { right: 5px; }
.spectrum { flex: 1; min-height: 0; width: 100%; }
```
